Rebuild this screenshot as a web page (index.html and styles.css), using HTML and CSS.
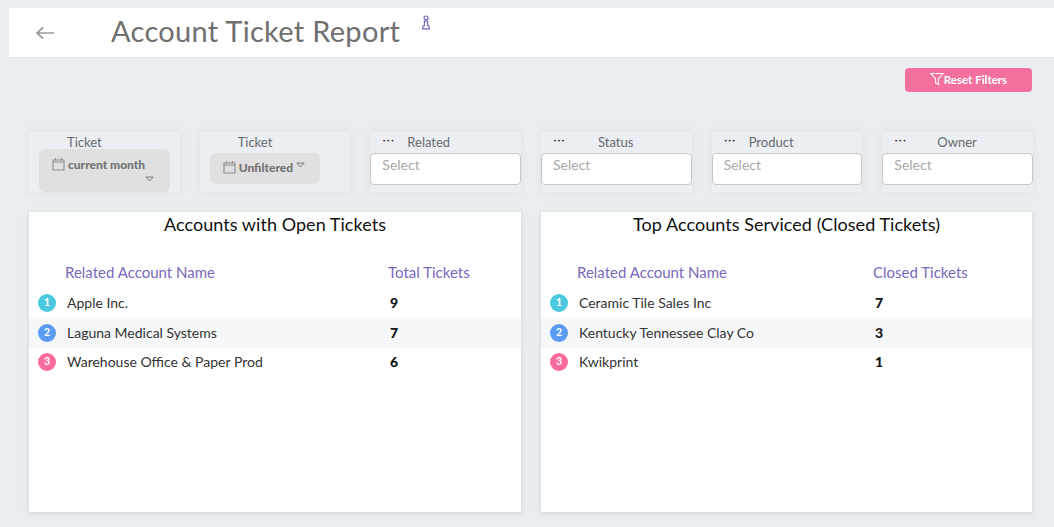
FILE: index.html
```html
<!DOCTYPE html>
<html lang="en">
<head>
<meta charset="utf-8">
<title>Account Ticket Report</title>
<link rel="stylesheet" href="styles.css">
</head>
<body>
<header class="page-head">
  <svg class="back" width="20" height="14" viewBox="0 0 20 14"><path d="M19 7H2M8 1.5 2 7l6 5.5" fill="none" stroke="#9a9a9a" stroke-width="1.7"/></svg>
  <h1>Account Ticket Report</h1>
  <svg class="info" width="10" height="15" viewBox="0 0 10 15"><path d="M5 1c1.300 0 2 .7 2 1.800S6.300 4.700 5 4.700 3 3.900 3 2.800 3.700 1 5 1zM3.400 6.200h3.200v4.200c1.200.5 1.700 1.200 1.700 2.100v1.300H1.700v-1.300c0-.9.500-1.600 1.700-2.100z" fill="none" stroke="#7467c4" stroke-width="1.2"/></svg>
</header>
<div class="toolbar">
  <button class="reset"><svg width="14" height="14" viewBox="0 0 14 14"><path d="M1 1.5h12L8.400 7v5.500L5.600 11V7z" fill="none" stroke="#fff" stroke-width="1.1"/></svg>Reset Filters</button>
</div>
<section class="filters">
  <div class="filter">
    <div class="filter-head"><span class="label label-a">Ticket</span></div>
    <div class="pill pill-tall">
      <svg class="cal" width="13" height="14" viewBox="0 0 13 14"><path d="M1 3h11v10H1zM1 5h11M3.500 1v2M9.500 1v2" fill="none" stroke="#8d8d8d" stroke-width="1.1"/></svg><b>current month</b>
      <svg class="caret caret-low" width="9" height="6" viewBox="0 0 9 6"><path d="M.8 1h7.400L4.500 5z" fill="none" stroke="#7b7b7b" stroke-width="1"/></svg>
    </div>
  </div>
  <div class="filter">
    <div class="filter-head"><span class="label label-a">Ticket</span></div>
    <div class="pill pill-short">
      <svg class="cal" width="13" height="14" viewBox="0 0 13 14"><path d="M1 3h11v10H1zM1 5h11M3.500 1v2M9.500 1v2" fill="none" stroke="#8d8d8d" stroke-width="1.1"/></svg><b>Unfiltered</b>
      <svg class="caret" width="9" height="6" viewBox="0 0 9 6"><path d="M.8 1h7.400L4.500 5z" fill="none" stroke="#7b7b7b" stroke-width="1"/></svg>
    </div>
  </div>
  <div class="filter">
    <div class="filter-head"><span class="dots">•••</span><span class="label label-b">Related</span></div>
    <div class="select">Select</div>
  </div>
  <div class="filter">
    <div class="filter-head"><span class="dots">•••</span><span class="label label-c">Status</span></div>
    <div class="select">Select</div>
  </div>
  <div class="filter">
    <div class="filter-head"><span class="dots">•••</span><span class="label label-b">Product</span></div>
    <div class="select">Select</div>
  </div>
  <div class="filter">
    <div class="filter-head"><span class="dots">•••</span><span class="label label-d">Owner</span></div>
    <div class="select">Select</div>
  </div>
</section>
<main class="cards">
  <article class="card card-open">
    <h2>Accounts with Open Tickets</h2>
    <div class="row row-head"><span class="head-name">Related Account Name</span><span class="head-val">Total Tickets</span></div>
    <div class="row"><span class="badge b1">1</span><span class="name">Apple Inc.</span><span class="val">9</span></div>
    <div class="row alt"><span class="badge b2">2</span><span class="name">Laguna Medical Systems</span><span class="val">7</span></div>
    <div class="row last"><span class="badge b3">3</span><span class="name">Warehouse Office &amp; Paper Prod</span><span class="val">6</span></div>
  </article>
  <article class="card card-closed">
    <h2>Top Accounts Serviced (Closed Tickets)</h2>
    <div class="row row-head"><span class="head-name">Related Account Name</span><span class="head-val">Closed Tickets</span></div>
    <div class="row"><span class="badge b1">1</span><span class="name">Ceramic Tile Sales Inc</span><span class="val">7</span></div>
    <div class="row alt"><span class="badge b2">2</span><span class="name">Kentucky Tennessee Clay Co</span><span class="val">3</span></div>
    <div class="row last"><span class="badge b3">3</span><span class="name">Kwikprint</span><span class="val">1</span></div>
  </article>
</main>
</body>
</html>
```
FILE: styles.css
```css
* { box-sizing: border-box; }
html, body { margin: 0; height: 100%; overflow: hidden; }
body {
  background: #eaeef1;
  font-family: "Lato", "Liberation Sans", sans-serif;
  padding-top: 8px;
}
.page-head {
  height: 50px;
  margin-left: 9px;
  background: #fff;
  border-bottom: 1px solid #e2e4e7;
  display: flex;
  align-items: flex-start;
}
.back { margin: 18px 0 0 26px; flex: none; }
.page-head h1 {
  margin: 4px 0 0 56px;
  font-size: 29px;
  line-height: 38px;
  font-weight: 400;
  color: #707070;
  letter-spacing: 0.3px;
}
.info { margin: 7px 0 0 21px; flex: none; }
.toolbar {
  display: flex;
  justify-content: flex-end;
  padding: 10px 22px 0 0;
  height: 74px;
}
.reset {
  width: 127px;
  height: 24px;
  border: 0;
  border-radius: 4px;
  background: #f3709f;
  color: #fff;
  font: 700 11.5px "Lato", sans-serif;
  display: flex;
  align-items: center;
  justify-content: center;
  padding: 0 0 2px;
}
.filters {
  display: grid;
  grid-template-columns: repeat(6, 1fr);
  column-gap: 20px;
  margin: 0 21px 0 29px;
  height: 60px;
}
.filter {
  background: #ebeef2;
  box-shadow: 0 0 6px rgba(150, 160, 170, .18);
  height: 60px;
  overflow: hidden;
}
.filter-head {
  height: 21px;
  display: flex;
  align-items: center;
  padding: 0 0 1px 12px;
}
.dots {
  font-size: 6.5px;
  letter-spacing: .2px;
  color: #333;
  width: 13px;
  margin-top: -2px;
  white-space: nowrap;
  font-family: "DejaVu Sans", sans-serif;
}
.label {
  font-size: 13px;
  color: #666a70;
  line-height: 16px;
}
.label-a { margin-left: 26px; }
.label-b { margin-left: 12px; }
.label-c { margin-left: 32px; }
.label-d { margin-left: 30px; }
.pill {
  margin: 0 10px;
  background: #e0e0e0;
  border-radius: 6px;
  color: #737373;
  font-size: 12px;
  position: relative;
}
.pill b { font-weight: 900; }
.cal { vertical-align: -2px; margin-right: 3px; }
.pill-tall {
  margin-top: -4px;
  height: 43px;
  padding: 8px 0 0 13px;
  width: 131px;
}
.pill-short {
  margin-top: 0;
  height: 31px;
  width: 110px;
  padding: 7px 0 0 13px;
}
.caret { vertical-align: 4px; margin-left: 0; }
.caret-low { position: absolute; right: 16px; top: 27px; margin: 0; }
.select {
  height: 32px;
  background: #fff;
  border: 1px solid #c8c8c8;
  border-radius: 4px;
  padding: 2px 0 0 11px;
  font-size: 14px;
  line-height: 18px;
  color: #a8a8a8;
}
.cards {
  display: grid;
  grid-template-columns: 492px 491px;
  column-gap: 20px;
  margin: 20px 0 0 29px;
}
.card {
  background: #fff;
  height: 300px;
  box-shadow: 0 1px 5px rgba(150, 160, 170, .35);
}
.card h2 {
  margin: 0;
  padding-top: 2px;
  height: 47px;
  text-align: center;
  font-size: 18px;
  line-height: 20px;
  font-weight: 400;
  letter-spacing: .05px;
  color: #111;
}
.row {
  display: grid;
  align-items: center;
  height: 30px;
  padding-left: 9px;
  font-size: 14px;
  color: #333;
}
.card-open .row { grid-template-columns: 18px 334px 1fr; }
.card-closed .row { grid-template-columns: 18px 307px 1fr; }
.row-head { height: 29px; color: #7a68bb; padding-bottom: 4px; }
.row .head-name { grid-column: 1 / 3; padding-left: 27px; font-size: 15px; }
.row .head-val { margin-left: -2px; font-size: 15px; white-space: nowrap; }
.row.last { height: 28px; }
.alt { background: #f5f7f9; }
.name { padding: 0 0 2px 11px; }
.val { font-weight: 900; color: #111; padding-bottom: 2px; }
.badge {
  width: 18px;
  height: 18px;
  border-radius: 50%;
  color: #fff;
  font-size: 10.5px;
  font-weight: 700;
  display: flex;
  align-items: center;
  justify-content: center;
  padding-bottom: 2px;
}
.b1 { background: #4cc8e0; }
.b2 { background: #5b9cf0; }
.b3 { background: #fb6a9c; }
```
